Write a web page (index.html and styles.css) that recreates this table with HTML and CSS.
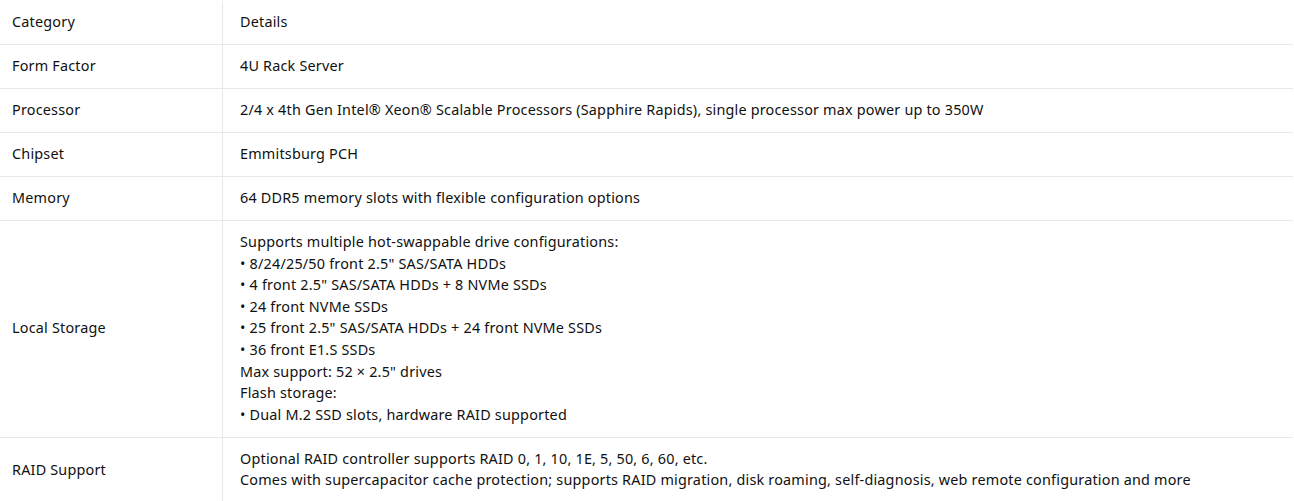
FILE: index.html
```html
<!DOCTYPE html>
<html lang="en">
<head>
<meta charset="utf-8">
<title>Specs</title>
<link rel="stylesheet" href="styles.css">
</head>
<body>
<table class="spec">
  <tbody>
    <tr><td class="cat">Category</td><td class="det">Details</td></tr>
    <tr><td class="cat">Form Factor</td><td class="det">4U Rack Server</td></tr>
    <tr><td class="cat">Processor</td><td class="det">2/4 x 4th Gen Intel® Xeon® Scalable Processors (Sapphire Rapids), single processor max power up to 350W</td></tr>
    <tr><td class="cat">Chipset</td><td class="det">Emmitsburg PCH</td></tr>
    <tr><td class="cat">Memory</td><td class="det">64 DDR5 memory slots with flexible configuration options</td></tr>
    <tr><td class="cat">Local Storage</td><td class="det">Supports multiple hot-swappable drive configurations:<br>• 8/24/25/50 front 2.5" SAS/SATA HDDs<br>• 4 front 2.5" SAS/SATA HDDs + 8 NVMe SSDs<br>• 24 front NVMe SSDs<br>• 25 front 2.5" SAS/SATA HDDs + 24 front NVMe SSDs<br>• 36 front E1.S SSDs<br>Max support: 52 × 2.5" drives<br>Flash storage:<br>• Dual M.2 SSD slots, hardware RAID supported</td></tr>
    <tr><td class="cat">RAID Support</td><td class="det">Optional RAID controller supports RAID 0, 1, 10, 1E, 5, 50, 6, 60, etc.<br>Comes with supercapacitor cache protection; supports RAID migration, disk roaming, self-diagnosis, web remote configuration and more</td></tr>
  </tbody>
</table>
</body>
</html>
```

FILE: styles.css
```css
html, body {
  margin: 0;
  padding: 0;
  background: #fff;
}
body {
  font-family: "Noto Sans", "Open Sans", "Liberation Sans", sans-serif;
  font-size: 14.4px;
  letter-spacing: 0.2px;
  color: #111;
}
.spec {
  width: 1293px;
  margin-top: 1px;
  border-collapse: collapse;
  table-layout: fixed;
}
.spec td {
  border-bottom: 1px solid #e8e8e8;
  line-height: 21.6px;
  padding: 10.2px 12px 11.2px;
  vertical-align: middle;
}
.spec .cat {
  width: 198px;
  border-right: 1px solid #e8e8e8;
}
.spec .det {
  padding-left: 17px;
}
```
